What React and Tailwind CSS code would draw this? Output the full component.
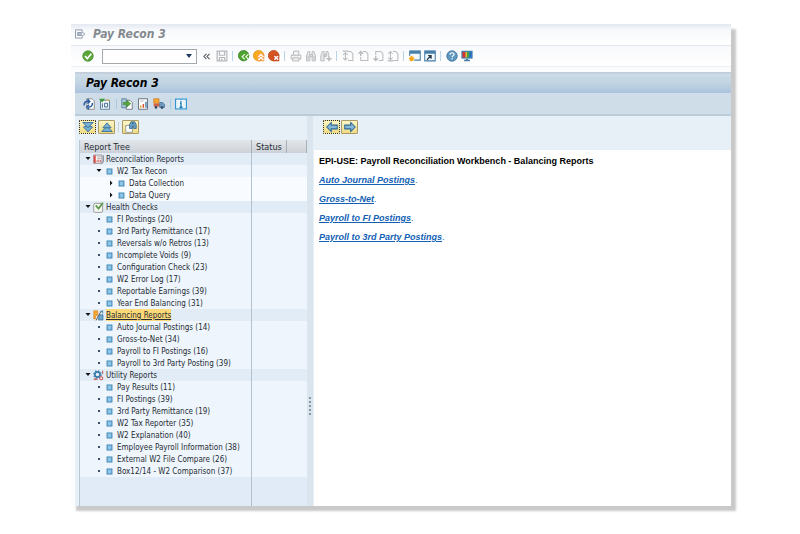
import React, { useState } from 'react';

const TREE = [
  {
    name: 'Reconcilation Reports',
    icon: 'reports',
    children: [
      {
        name: 'W2 Tax Recon',
        children: [
          { name: 'Data Collection', closed: true },
          { name: 'Data Query', closed: true },
        ],
      },
    ],
  },
  {
    name: 'Health Checks',
    icon: 'health',
    children: [
      { name: 'FI Postings (20)' },
      { name: '3rd Party Remittance (17)' },
      { name: 'Reversals w/o Retros (13)' },
      { name: 'Incomplete Voids (9)' },
      { name: 'Configuration Check (23)' },
      { name: 'W2 Error Log (17)' },
      { name: 'Reportable Earnings (39)' },
      { name: 'Year End Balancing (31)' },
    ],
  },
  {
    name: 'Balancing Reports',
    icon: 'balance',
    children: [
      { name: 'Auto Journal Postings (14)' },
      { name: 'Gross-to-Net (34)' },
      { name: 'Payroll to FI Postings (16)' },
      { name: 'Payroll to 3rd Party Posting (39)' },
    ],
  },
  {
    name: 'Utility Reports',
    icon: 'utility',
    children: [
      { name: 'Pay Results (11)' },
      { name: 'FI Postings (39)' },
      { name: '3rd Party Remittance (19)' },
      { name: 'W2 Tax Reporter (35)' },
      { name: 'W2 Explanation (40)' },
      { name: 'Employee Payroll Information (38)' },
      { name: 'External W2 File Compare (26)' },
      { name: 'Box12/14 - W2 Comparison (37)' },
    ],
  },
];

const LINKS = ['Auto Journal Postings', 'Gross-to-Net', 'Payroll to FI Postings', 'Payroll to 3rd Party Postings'];

const LEVEL_PADDING = ['pl-[5px]', 'pl-4', 'pl-7'];

// All glyphs share a 16x16 grid
const GLYPHS = {
  exit: (
    <g fill="none" stroke="#929daf" strokeWidth="1.3">
      <path d="M11 4.500V2.500H2v11h9V11.500" />
      <path d="M4.500 6h5M4.500 10h5" />
      <path d="M4.500 7h6V5l4 3-4 3V9h-6z" fill="#fff" />
    </g>
  ),
  ok: (
    <g>
      <circle cx="8" cy="8" r="7" fill="#5aa63a" stroke="#458c2b" />
      <path d="M4 8l3 3.500 5.500-6.500" fill="none" stroke="#fff" strokeWidth="2.200" />
    </g>
  ),
  save: (
    <g fill="none" stroke="#b3b7bb" strokeWidth="1.600">
      <path d="M1.500 1.500h13v13h-13z" />
      <path d="M4.500 2v5h7V2M4.500 14v-4h7v4M6.500 12.500h2" />
    </g>
  ),
  back: (
    <g>
      <circle cx="7.500" cy="7.500" r="7" fill="#4fa032" stroke="#348021" />
      <path d="M9 5.500L5.500 9 9 12.500M14 5.500L10.500 9l3.500 3.500" fill="none" stroke="#e9f7df" strokeWidth="1.700" />
    </g>
  ),
  up: (
    <g>
      <circle cx="7.500" cy="7.500" r="7" fill="#f9ac1c" stroke="#df8b12" />
      <path d="M6 15h9V5H6z" fill="#f2a04a" />
      <path d="M7 9.500l3.500-3.500L14 9.500M7 13.500l3.500-3.500 3.500 3.500" fill="none" stroke="#fff" strokeWidth="1.700" />
    </g>
  ),
  cancel: (
    <g>
      <circle cx="7.500" cy="7.500" r="7" fill="#d65521" stroke="#b64017" />
      <path d="M7 6h8v9H7z" fill="#c64a1e" />
      <path d="M8.500 8l5 5M13.500 8l-5 5" stroke="#fff" strokeWidth="2" />
    </g>
  ),
  print: (
    <g fill="#f3f3f3" stroke="#b5b7b9" strokeWidth="1.300">
      <path d="M4 7l1-5.500h7L11.500 7" />
      <path d="M1.500 7h13v5h-13z" />
      <path d="M4 10.500h8v4H3.500z" />
    </g>
  ),
  find: (
    <g fill="#e6e7e8" stroke="#b9bbbd" strokeWidth="1.200">
      <path d="M2 14.500V8l2-6h2.500v12.500zM14 14.500V8l-2-6H9.500v12.500z" />
      <path d="M6.500 6h3v3h-3zM4 8v5M12 8v5" />
    </g>
  ),
  findNext: (
    <g fill="#e6e7e8" stroke="#b9bbbd" strokeWidth="1.200">
      <path d="M1 14.500V8l2-6h2.500v12.500zM12 8l-1.500-6H8v7M5.500 6H8v3H5.500z" />
      <path d="M12 8v7M8.500 11.500h7" strokeWidth="2" />
    </g>
  ),
  first: (
    <g fill="none" stroke="#b9bbbd" strokeWidth="1.400">
      <path d="M8 2h3.500l3 3v9H8" />
      <path d="M1 1.500h7M4.500 3v10M1.500 6.500l3-3 3 3M1.500 10.500l3 3 3-3" />
    </g>
  ),
  prev: (
    <g fill="none" stroke="#b9bbbd" strokeWidth="1.400">
      <path d="M8 2h3.500l3 3v9H5V9" />
      <path d="M5 8V2M2 5l3-3 3 3" strokeWidth="1.800" />
    </g>
  ),
  next: (
    <g fill="none" stroke="#b9bbbd" strokeWidth="1.400">
      <path d="M5 7V2h6.500l3 3v9H9" />
      <path d="M5 8v6M2 11l3 3 3-3" strokeWidth="1.800" />
    </g>
  ),
  last: (
    <g fill="none" stroke="#b9bbbd" strokeWidth="1.400">
      <path d="M8 2h3.500l3 3v9H8" />
      <path d="M1 14.500h7M4.500 2v11M1.500 5l3-3 3 3M1.500 10l3 3 3-3" />
    </g>
  ),
  session: (
    <g>
      <path d="M1 1.500h14v12H1z" fill="#f3f8fc" stroke="#477fab" strokeWidth="1.400" />
      <path d="M1 1h14v4H1z" fill="#477fab" />
      <path d="M0 8h7v7H0z" fill="#fff" />
      <path d="M3.500 8v7M0 11.500h7M1 9l5 5M6 9l-5 5" stroke="#f5a81c" strokeWidth="1.700" />
    </g>
  ),
  shortcut: (
    <g>
      <path d="M1 1.500h14v13H1z" fill="#f3f8fc" stroke="#477fab" strokeWidth="1.400" />
      <path d="M1 1h14v4H1z" fill="#477fab" />
      <path d="M4 13l5-5M5.500 7.500h4v4" fill="none" stroke="#253748" strokeWidth="1.500" />
    </g>
  ),
  help: (
    <g>
      <circle cx="8" cy="8" r="7" fill="#5f97bf" stroke="#386f9b" />
      <path d="M5.500 6.200c0-3.500 5.200-3.200 5.200-.4 0 1.700-2.600 1.800-2.600 4M8.100 11v1.800" fill="none" stroke="#fff" strokeWidth="1.600" />
    </g>
  ),
  monitor: (
    <g>
      <path d="M.5 1h15v10.500H.5z" fill="#3d82b5" />
      <path d="M2 2.500h4V10H2z" fill="#d9332b" />
      <path d="M6 2.500h2V10H6z" fill="#e8b72c" />
      <path d="M8 2.500h3V10H8z" fill="#45a33c" />
      <path d="M11 2.500h3V10h-3z" fill="#286fc0" />
      <path d="M6.500 11.500h3V13h2.500v2H4v-2h2.500z" fill="#4b7e9f" />
    </g>
  ),
  refresh: (
    <g>
      <path d="M5 1h7l3 3v11H5z" fill="#fff" stroke="#76716b" />
      <path d="M1.500 10c-.5-4 2.500-6 5.500-5.500M6 1.500L9 4.500 6 7.500" fill="none" stroke="#2c5c9e" strokeWidth="2" />
      <path d="M12.500 6.500c.5 4-2.500 6-5.500 5.500M8 9L5 12l3 3" fill="none" stroke="#2c5c9e" strokeWidth="2" />
    </g>
  ),
  layout: (
    <g>
      <path d="M2 3h12v12H2z" fill="#f5f8fa" stroke="#537b98" strokeWidth="1.200" />
      <path d="M7.500 7h4v5h-4zM4.500 7v6" fill="none" stroke="#3b6990" strokeWidth="1.300" />
      <path d="M0 1h8L4 6z" fill="#3f9b36" />
      <path d="M9 3h5" stroke="#dfb344" strokeWidth="1.500" />
    </g>
  ),
  transfer: (
    <g>
      <path d="M7 3h5l3 3v9H7z" fill="#fff" stroke="#6d7680" strokeWidth="1.200" />
      <path d="M1 1h6v12H1z" fill="#a9c5d8" stroke="#4d7591" />
      <path d="M3 6h5V3l5 4.500L8 12V9H3z" fill="#55a837" stroke="#35822a" strokeWidth=".7" />
    </g>
  ),
  chart: (
    <g>
      <path d="M2 1h12v14H2z" fill="#fff" stroke="#69727b" strokeWidth="1.300" />
      <path d="M4 4h5" stroke="#aaa" />
      <path d="M5 10v3" stroke="#e3a12c" strokeWidth="2" />
      <path d="M8.500 8v5" stroke="#d1572f" strokeWidth="2" />
      <path d="M12 5v8" stroke="#4a86b5" strokeWidth="2" />
    </g>
  ),
  truck: (
    <g>
      <path d="M1 1h7v6H1z" fill="#f6a733" stroke="#d77d24" />
      <path d="M1 7.500h8v4H1z" fill="#d2614a" />
      <path d="M9 6h4l2.500 3v3.500H9z" fill="#6f9cc0" stroke="#43708f" />
      <circle cx="4" cy="12.500" r="1.700" fill="#334960" />
      <circle cx="12" cy="12.800" r="1.700" fill="#334960" />
    </g>
  ),
  info: (
    <g>
      <path d="M.8 1.500h14.400v13H.8z" fill="#fff" stroke="#3095cd" strokeWidth="1.600" />
      <path d="M4 1v14M12 1v14" stroke="#b6dcf0" />
      <path d="M8 3.500v2M6.500 7H8v5M6 12.300h4" fill="none" stroke="#1479b5" strokeWidth="1.800" />
    </g>
  ),
  expand: (
    <g fill="#79b0d3" stroke="#2b6791" strokeWidth="1.100">
      <path d="M4 7h8l2 1-6 6.500L2 8z" />
      <path d="M1 2h14L8 9z" />
    </g>
  ),
  collapse: (
    <g fill="#79b0d3" stroke="#2b6791" strokeWidth="1.100">
      <path d="M1 14l7-7 7 7z" />
      <path d="M2.500 9L8 2.500 13.500 9z" />
    </g>
  ),
  lookup: (
    <g>
      <path d="M1 6h9v9H1z" fill="#fff" stroke="#7d8790" />
      <path d="M6 10V5l2-4h2v3h1V1h2l2 4v5h-3.500V7h-2v3z" fill="#699fc7" stroke="#2c618a" />
    </g>
  ),
  left: <path d="M1 8l6-6v3.500h8v5H7V14z" fill="#86b9d8" stroke="#2d6893" strokeWidth="1.400" />,
  right: <path d="M15 8L9 2v3.500H1v5h8V14z" fill="#86b9d8" stroke="#2d6893" strokeWidth="1.400" />,
  reports: (
    <g>
      <path d="M1 1.500h12v12H1z" fill="#f6f2f2" stroke="#7d7377" />
      <path d="M1 2h3v11H1z" fill="#dd4e49" />
      <path d="M6 4h6M6 6.500h6" stroke="#a09da5" />
      <path d="M6 12V9M8.500 12V8M11 12V9" stroke="#c6504f" strokeWidth="1.300" />
      <path d="M15 2v9l-2 3" fill="none" stroke="#687380" strokeWidth="1.300" />
    </g>
  ),
  health: (
    <g>
      <rect x="1" y="2" width="13" height="13" rx="2" fill="#f7f7f4" stroke="#8a8c89" strokeWidth="1.200" />
      <path d="M4 5L8 9.500 14.500 1" fill="none" stroke="#5d9b4b" strokeWidth="2.600" />
    </g>
  ),
  balance: (
    <g>
      <path d="M1 1h6v7H4v5H1z" fill="#f2a52e" stroke="#d47e25" strokeWidth=".7" />
      <path d="M12 1L4.500 15" stroke="#5a5149" strokeWidth="1.300" />
      <path d="M9 7h5.500v7.500H8z" fill="#70a9cd" stroke="#2e6994" />
      <path d="M11 3.500L14 1v4" fill="none" stroke="#3e7ba5" strokeWidth="1.400" />
    </g>
  ),
  utility: (
    <g>
      <circle cx="6.500" cy="6.500" r="3.800" fill="#e7f1f8" stroke="#347aa9" strokeWidth="2.400" />
      <circle cx="6.500" cy="6.500" r="5.600" fill="none" stroke="#347aa9" strokeWidth="1.500" strokeDasharray="2 2.400" />
      <circle cx="12" cy="12" r="2.200" fill="#fff" stroke="#c25454" strokeWidth="1.500" />
      <path d="M14 1v5M1 13.500h6M3 11.500v3" stroke="#c25454" strokeWidth="1.400" />
    </g>
  ),
  item: <path d="M4.500 4.500h7v7h-7z" fill="#8dc5e8" stroke="#3f86b4" strokeWidth="1.500" />,
};

const Glyph = ({ name, className = 'size-3' }) => (
  <svg viewBox="0 0 16 16" className={`${className} shrink-0`} aria-hidden="true">
    {GLYPHS[name]}
  </svg>
);

const ToolButton = ({ name, label }) => (
  <button type="button" aria-label={label} className="shrink-0">
    <Glyph name={name} />
  </button>
);

const GoldButton = ({ name, label, focused }) => (
  <button
    type="button"
    aria-label={label}
    className={`flex h-[14px] w-[17px] items-center justify-center rounded-[1px] border bg-linear-to-b from-[#fdf6c5] to-[#efdb83] ${
      focused ? 'border-dotted border-[#333333]' : 'border-[#a99a66]'
    }`}
  >
    <Glyph name={name} />
  </button>
);

const Separator = () => <span className="mr-[2px] ml-px h-[10px] w-px shrink-0 bg-[#b9d3e8]" />;

const Caret = ({ kind }) => (
  <svg viewBox="0 0 6 6" className="size-[6px] shrink-0" aria-hidden="true">
    {kind === 'open' && <path d="M.5 1h5L3 4z" fill="#111" />}
    {kind === 'closed' && <path d="M2 .5v5L4.500 3z" fill="#111" />}
    {kind === 'leaf' && <path d="M2 2h2v2H2z" fill="#35506a" />}
  </svg>
);

const rowColor = (node, level) => {
  if (level === 0) return 'bg-[#e2ecf7]';
  if (level === 2) return 'bg-[#f8fbff]';
  return 'bg-[#eef5fd]';
};

const flatten = (nodes, collapsed, level = 0) =>
  nodes.flatMap((node) => [
    { node, level },
    ...(node.children && !collapsed[node.name] ? flatten(node.children, collapsed, level + 1) : []),
  ]);

const ReportTree = () => {
  const [collapsed, setCollapsed] = useState({});
  const [selected, setSelected] = useState('Balancing Reports');

  const toggle = (name) => setCollapsed((prev) => ({ ...prev, [name]: !prev[name] }));

  return (
    <div className="flex flex-1 flex-col border-l border-[#b9c6d3] bg-[#e0ebf7] font-['DejaVu_Sans_Condensed','DejaVu_Sans',sans-serif] text-[8px] leading-3 text-[#262c33]">
      <table className="w-full table-fixed border-separate border-spacing-0">
        <thead>
          <tr className="h-[13px] bg-linear-to-b from-[#e3e6ea] to-[#cdd2d8] text-left text-[9px]">
            <th className="w-[172px] border-r border-[#a5afba] p-0 pl-1 font-normal">Report Tree</th>
            <th className="w-[35px] border-r border-[#a5afba] p-0 pl-1 font-normal">Status</th>
            <td className="border-r border-[#a5afba] p-0" />
          </tr>
        </thead>
        <tbody>
          {flatten(TREE, collapsed).map(({ node, level }, i) => {
            const kind = node.children ? (collapsed[node.name] ? 'closed' : 'open') : node.closed ? 'closed' : 'leaf';
            return (
              <tr key={i} className={rowColor(node, level)}>
                <td className="border-r border-[#b4c1cf] p-0">
                  <div className={`flex h-3 items-center gap-[2px] ${LEVEL_PADDING[level]}`}>
                    {kind === 'leaf' ? (
                      <Caret kind={kind} />
                    ) : (
                      <button type="button" aria-label={`Toggle ${node.name}`} onClick={() => toggle(node.name)}>
                        <Caret kind={kind} />
                      </button>
                    )}
                    <Glyph name={node.icon || 'item'} className="size-[11px]" />
                    <button
                      type="button"
                      onClick={() => setSelected(node.name)}
                      className={`pt-[2px] leading-[10px] whitespace-nowrap ${
                        selected === node.name ? 'bg-[#fdd978] underline' : ''
                      }`}
                    >
                      {node.name}
                    </button>
                  </div>
                </td>
                <td className="p-0" colSpan={2} />
              </tr>
            );
          })}
        </tbody>
      </table>
      <div className="w-[172px] flex-1 border-r border-[#b4c1cf]" />
    </div>
  );
};

const TitleBar = () => (
  <header className="flex h-[22px] items-center gap-[7px] border-b border-[#e3e8f0] bg-linear-to-b from-[#e4e8f1] via-[#f8f9fc] via-30% to-white pb-[2px] pl-[3px]">
    <Glyph name="exit" />
    <span className="font-['DejaVu_Sans_Condensed','DejaVu_Sans',sans-serif] text-[12px] leading-[14px] font-bold text-[#84898f] italic">
      Pay Recon 3
    </span>
  </header>
);

const SystemBar = () => (
  <div className="flex h-[21px] items-center gap-[3px] border-b border-[#eceff5] bg-linear-to-b from-[#f8f9fc] to-white pl-[11px]">
    <ToolButton name="ok" label="Enter" />
    <div className="ml-[5px] flex h-[15px] w-[95px] items-center border border-[#a4a9ae] bg-white">
      <input type="text" aria-label="Command" className="h-full min-w-0 flex-1 px-1 text-[9px] outline-none" />
      <button type="button" aria-label="Command history" className="px-1">
        <svg viewBox="0 0 6 4" className="h-1 w-[6px]" aria-hidden="true">
          <path d="M0 0h6L3 4z" fill="#203a63" />
        </svg>
      </button>
    </div>
    <button type="button" aria-label="Hide command field" className="mx-[3px]">
      <svg viewBox="0 0 8 8" className="size-[7px]" aria-hidden="true">
        <path d="M4 1L1 4l3 3M7.500 1l-3 3 3 3" fill="none" stroke="#50565d" strokeWidth="1.200" />
      </svg>
    </button>
    <ToolButton name="save" label="Save" />
    <Separator />
    <ToolButton name="back" label="Back" />
    <ToolButton name="up" label="Exit" />
    <ToolButton name="cancel" label="Cancel" />
    <Separator />
    <ToolButton name="print" label="Print" />
    <ToolButton name="find" label="Find" />
    <ToolButton name="findNext" label="Find next" />
    <Separator />
    <ToolButton name="first" label="First page" />
    <ToolButton name="prev" label="Previous page" />
    <ToolButton name="next" label="Next page" />
    <ToolButton name="last" label="Last page" />
    <Separator />
    <ToolButton name="session" label="New session" />
    <ToolButton name="shortcut" label="Create shortcut" />
    <Separator />
    <ToolButton name="help" label="Help" />
    <ToolButton name="monitor" label="Customize local layout" />
  </div>
);

const AppBar = () => (
  <div className="flex h-[23px] items-center gap-1 border-b-2 border-[#bccbd8] bg-[#cfdde8] pl-2">
    <ToolButton name="refresh" label="Refresh" />
    <ToolButton name="layout" label="Layout" />
    <span className="ml-px h-[10px] w-px bg-[#aac9df]" />
    <ToolButton name="transfer" label="Transfer" />
    <ToolButton name="chart" label="Chart" />
    <ToolButton name="truck" label="Transport" />
    <span className="ml-px h-[10px] w-px bg-[#aac9df]" />
    <ToolButton name="info" label="Information" />
  </div>
);

const App = () => (
  <div className="flex min-h-screen flex-col bg-white pt-6 pr-[69px] pb-7 pl-[71px]">
    <div className="flex flex-1 flex-col bg-white shadow-[5px_5px_2px_0_#c9c9c9]">
      <TitleBar />
      <SystemBar />
      <div className="flex flex-1 flex-col bg-[#fbfcfe] pt-[5px] pl-1">
        <div className="flex h-[21px] items-center border-t-2 border-[#c3d0dc] bg-linear-to-b from-[#cddce7] via-[#c0d3e2] to-[#abc3dd] pb-[2px] pl-[11px]">
          <h1 className="font-['DejaVu_Sans_Condensed','DejaVu_Sans',sans-serif] text-[12px] leading-[14px] font-bold text-black italic">
            Pay Recon 3
          </h1>
        </div>
        <AppBar />
        <div className="flex flex-1 bg-[#e8f0f7] pl-1">
          <aside className="flex w-[228px] shrink-0 flex-col">
            <div className="flex h-6 items-center gap-[2px] pb-[3px]">
              <GoldButton name="expand" label="Expand all" focused />
              <GoldButton name="collapse" label="Collapse all" />
              <span className="mx-px h-[10px] w-px bg-[#c6d3de]" />
              <GoldButton name="lookup" label="Find in tree" />
            </div>
            <ReportTree />
          </aside>
          {/* Splitter with grip dots */}
          <div className="flex w-[6px] shrink-0 flex-col items-center justify-center bg-[#dae5ee] pt-[190px]">
            <div className="flex flex-col gap-[2px]">
              {[0, 1, 2, 3, 4].map((n) => (
                <span key={n} className="size-[2px] bg-[#8496a6]" />
              ))}
            </div>
          </div>
          <main className="flex flex-1 flex-col pl-px">
            <div className="flex h-[34px] items-start gap-px pt-1 pl-[9px]">
              <GoldButton name="left" label="Back" focused />
              <GoldButton name="right" label="Forward" />
            </div>
            <div className="flex flex-1 flex-col gap-2 bg-white pt-[6px] pl-[5px] font-['Liberation_Sans',Arial,sans-serif] text-[9px] leading-[11px]">
              <h2 className="font-bold text-black">EPI-USE: Payroll Reconciliation Workbench - Balancing Reports</h2>
              {LINKS.map((link) => (
                <p key={link} className="text-[#1261b5]">
                  <a href="#" className="font-bold italic underline">
                    {link}
                  </a>
                  .
                </p>
              ))}
            </div>
          </main>
        </div>
      </div>
    </div>
  </div>
);

export default App;
